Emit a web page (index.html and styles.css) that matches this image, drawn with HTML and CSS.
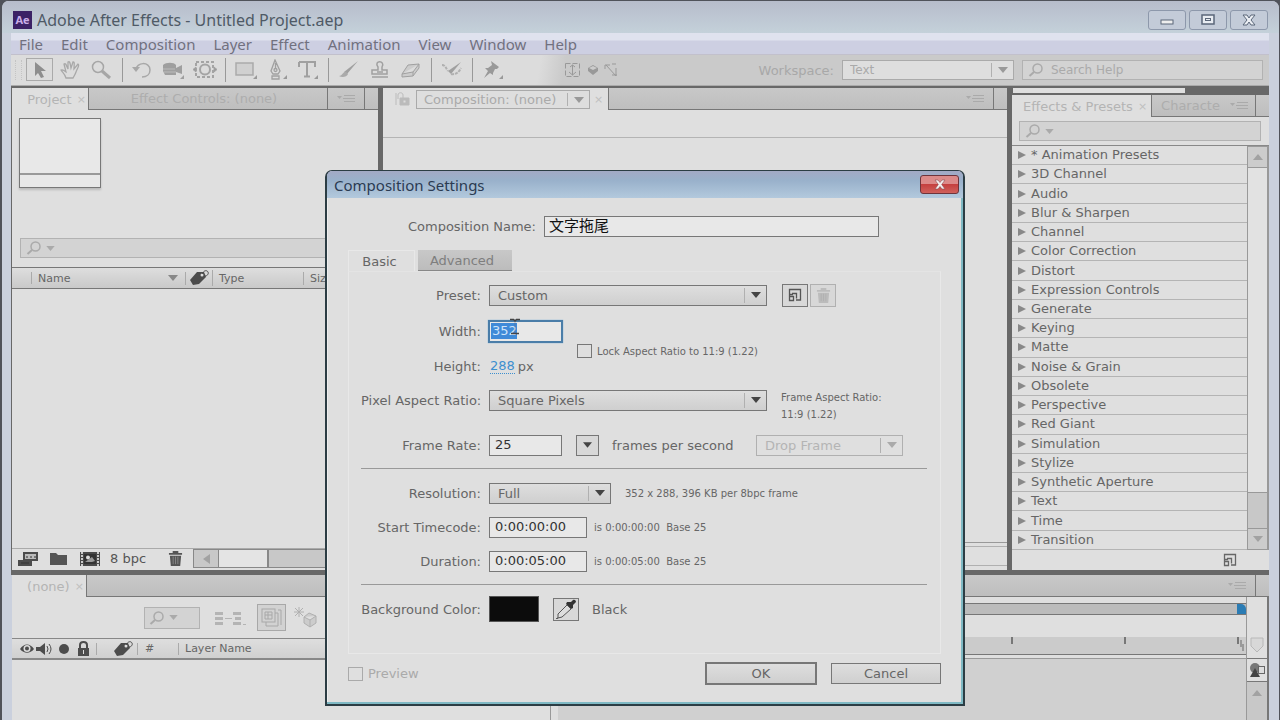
FILE: index.html
```html
<!DOCTYPE html>
<html lang="en">
<head>
<meta charset="utf-8">
<title>Adobe After Effects - Untitled Project.aep</title>
<link rel="stylesheet" href="styles.css">
</head>
<body>
<svg class="defs" aria-hidden="true">
  <symbol id="search" viewBox="0 0 16 14"><circle cx="9.500" cy="5.500" r="4.500" fill="none" stroke="currentColor" stroke-width="1.500"/><path d="M6 9 1.500 13" stroke="currentColor" stroke-width="2"/></symbol>
  <symbol id="down" viewBox="0 0 10 6"><path d="M0 0h10L5 6z" fill="currentColor"/></symbol>
  <symbol id="right" viewBox="0 0 8 8"><path d="M0 0l8 4-8 4z" fill="currentColor"/></symbol>
  <symbol id="flyout" viewBox="0 0 18 10"><path d="M0 2h5L2.500 5z" fill="currentColor"/><path d="M7 1.500h11M6 4.500h12M7 7.500h11" stroke="currentColor" stroke-width="1"/></symbol>
  <symbol id="trash" viewBox="0 0 16 16"><path d="M2 5h12l-1 11H3zM1 2h14v2H1zM5 0h6v2H5z" fill="currentColor"/><path d="M5.500 6v8M8 6v8M10.500 6v8" stroke="#aaa" stroke-opacity=".6"/></symbol>
  <symbol id="tag" viewBox="0 0 20 16"><path d="M1 10 8 2l7 0 2 5-7 7-6 1z" fill="currentColor"/><circle cx="13" cy="5" r="1.500" fill="#ddd"/><path d="M13 4c2-4 5-4 6-2s-1 4-3 4" fill="none" stroke="currentColor"/></symbol>
  <symbol id="newitem" viewBox="0 0 14 14"><path d="M1.500 12.500V1.500h11v10.500H8M1.500 6.500H5M4 5.500h4.500v5M1.500 8.500h4v4h-4z" fill="none" stroke="currentColor" stroke-width="1.300"/></symbol>
</svg>
<div class="window">
  <header class="titlebar">
    <span class="logo">Ae</span>
    <h1>Adobe After Effects - Untitled Project.aep</h1>
    <button class="winbtn" aria-label="Minimize"><svg width="14" height="12"><rect x="1" y="6" width="12" height="4" fill="#eee" stroke="#5b6779"/></svg></button>
    <button class="winbtn" aria-label="Maximize"><svg width="14" height="12"><rect x="1" y="1" width="12" height="9" fill="#e8ecf2" stroke="#5b6779" stroke-width="1.500"/><rect x="4.500" y="4.500" width="5" height="2" fill="none" stroke="#5b6779"/></svg></button>
    <button class="winbtn" aria-label="Close"><svg width="16" height="12"><path d="M2 1h4l2 3 2-3h4l-4 5 4 5h-4L8 8l-2 3H2l4-5z" fill="#eceff4" stroke="#5b6779"/></svg></button>
  </header>
  <nav class="menubar">
    <button>File</button><button>Edit</button><button>Composition</button><button>Layer</button><button>Effect</button><button>Animation</button><button>View</button><button>Window</button><button>Help</button>
  </nav>
  <div class="toolbar">
    <span class="grip"></span>
    <button class="tool on" aria-label="Selection"><svg width="28" height="24"><rect x=".5" y=".5" width="26" height="22" fill="#dcdcdc" stroke="#aaa"/><path d="M9 4v14l3-3 3 5 3-1-3-6h5z" fill="#8e8e8e"/></svg></button>
    <button class="tool" aria-label="Hand"><svg width="24" height="20" fill="none" stroke="#a8a8a8" stroke-width="1.300"><path d="M7 18c-1-4-4-6-5-8 2-1 3 1 5 2L5 4c2-1 2 1 4 5V2c2-1 2 1 3 6l2-6c2 0 1 2 1 7l4-5c2 1 0 3-2 8-1 3-2 4-3 6z"/></svg></button>
    <button class="tool" aria-label="Zoom"><svg width="24" height="20" fill="none" stroke="#a6a6a6"><circle cx="8" cy="7" r="5.500" stroke-width="1.500"/><path d="m12 11 8 7" stroke-width="3"/></svg></button>
    <i class="sep"></i>
    <button class="tool" aria-label="Rotate"><svg width="24" height="20" fill="none" stroke="#a8a8a8" stroke-width="1.500"><path d="M5 10c0-8 14-9 14 0 0 4-3 7-8 7"/><path d="M1 7h8l-4 5z" fill="#a8a8a8" stroke="none"/></svg></button>
    <button class="tool" aria-label="Camera"><svg width="24" height="20" fill="#9f9f9f"><path d="M1 5c3-3 11-3 13 0v3l6-3v9l-6-2v3H3l-2-4zM18 19l4-4v4z"/><path d="M1 9h12M2 12h12" stroke="#bbb"/></svg></button>
    <button class="tool" aria-label="Pan Behind"><svg width="24" height="20" fill="none" stroke="#a4a4a4"><rect x="3" y="2" width="17" height="15" stroke-width="2" stroke-dasharray="3 2"/><circle cx="12" cy="9.500" r="5" stroke-width="2"/><path d="M0 9.500 3 7v5zM24 9.500 21 7v5z" fill="#999"/></svg></button>
    <i class="sep"></i>
    <button class="tool" aria-label="Rectangle"><svg width="26" height="20"><rect x="3" y="3" width="17" height="12" fill="#d0d0d0" stroke="#aaa" stroke-width="1.500"/><path d="M20 19l4-4v4z" fill="#999"/></svg></button>
    <button class="tool" aria-label="Pen"><svg width="24" height="22" fill="none" stroke="#a0a0a0" stroke-width="1.300"><path d="M10 1 6 12l2 3h5l2-3zM7 17h7v3H7zM10.500 4v6"/><circle cx="10.500" cy="11" r="1.500"/><path d="M18 20l4-4v4z" fill="#999" stroke="none"/></svg></button>
    <button class="tool" aria-label="Type"><svg width="24" height="20"><path d="M3 2h16v5M3 7V2M11 2v14M8 16.500h6" fill="none" stroke="#a0a0a0" stroke-width="2"/><path d="M18 19l4-4v4z" fill="#999"/></svg></button>
    <i class="sep"></i>
    <button class="tool" aria-label="Brush"><svg width="24" height="20"><path d="M21 1 10 14l-3-2z" fill="#a0a0a0"/><path d="M9 12c-3-1-3 4-7 4 3 2 8 1 9-2z" fill="#aaa"/></svg></button>
    <button class="tool" aria-label="Clone Stamp"><svg width="22" height="20" fill="none" stroke="#a0a0a0" stroke-width="1.500"><path d="M9 7C4 0 17 0 13 7v3h5v4H3v-4h6zM3 17h16M8 12h6"/></svg></button>
    <button class="tool" aria-label="Eraser"><svg width="24" height="20" fill="#ccc" stroke="#a0a0a0"><path d="m9 5 11-1-6 8-11 2zM3 14v3l11-1 6-8V4M14 12v4"/></svg></button>
    <i class="sep"></i>
    <button class="tool" aria-label="Roto Brush"><svg width="24" height="20"><path d="M21 2 11 14 8 11z" fill="#a0a0a0"/><path d="M2 5c3 0 4 3 6 6m3 3c5 1 8-2 10-6" fill="none" stroke="#b0b0b0" stroke-width="2" stroke-dasharray="3 1"/></svg></button>
    <i class="sep"></i>
    <button class="tool" aria-label="Puppet Pin"><svg width="24" height="20" fill="#999"><path d="m10 1 8 6-2 2-2 0-2 4 0 2-3-2-6 5 4-7-3-3 3 0 4-3z"/><path d="M18 19l4-4v4z"/></svg></button>
    <span class="axes">
      <svg width="18" height="16" fill="none" stroke="#999"><rect x="1.500" y="1.500" width="14" height="13" stroke-dasharray="5 2"/><path d="M8.500 3v10M5 10l3.500 3 3.500-3M6 5l2.500-2L11 5"/></svg>
      <svg width="12" height="12" fill="#999"><path d="m1 4 5-3 5 3v3l-5 4-5-4z"/><path d="m2 4 4-2 4 2-4 2z" fill="#ccc"/></svg>
      <svg width="14" height="14" fill="none" stroke="#999"><path d="m2 2 10 11V5M1 6V2h5M8 1h4M8 12h5"/></svg>
    </span>
    <label class="wslabel" for="ws">Workspace:</label>
    <span class="select ws"><select id="ws"><option>Text</option></select><svg class="arr"><use href="#down"/></svg></span>
    <label class="search help"><svg class="mag"><use href="#search"/></svg><input type="text" placeholder="Search Help" aria-label="Search Help"></label>
  </div>

  <main class="work">
    <section class="panel project">
      <div class="tabs"><button class="tab on">Project <small>×</small></button><button class="tab off">Effect Controls: (none)</button><span class="fly"><svg class="flysvg"><use href="#flyout"/></svg></span><span class="end"></span></div>
      <div class="preview"><div class="thumb"></div></div>
      <label class="search find"><svg class="mag"><use href="#search"/></svg><svg class="arr"><use href="#down"/></svg><input type="text" aria-label="Search project"></label>
      <div class="cols"><span class="c0"></span><span class="c1">Name<svg class="sort"><use href="#down"/></svg></span><span class="c2"><svg width="20" height="16"><use href="#tag"/></svg></span><span class="c3">Type</span><span class="c4">Size</span></div>
      <div class="items"></div>
      <div class="foot">
        <button aria-label="Interpret Footage"><svg width="20" height="14"><path d="M5 0h15v9H5zM0 8h14v6H0z" fill="#4c4c4c"/><path d="M7 2h11v5H7z" fill="#bbb"/><path d="M8 5h2m2 0h2m2 0h2M3 11h8" stroke="#333"/></svg></button>
        <button aria-label="New Folder"><svg width="18" height="13"><path d="M0 1h6l2 2h9v10H0z" fill="#555"/></svg></button>
        <button aria-label="New Composition"><svg width="20" height="14"><path d="M0 0h20v14H0z" fill="#4a4a4a"/><path d="M2 0v14M18 0v14" stroke="#ccc" stroke-width="2" stroke-dasharray="2 1"/><rect x="4" y="2" width="12" height="10" fill="#333"/><circle cx="8" cy="5.500" r="2" fill="#ddd"/><path d="m5 10 7-5 3 4-3 1z" fill="#999"/></svg></button>
        <button class="bpc">8 bpc</button>
        <button aria-label="Delete"><svg width="15" height="15"><use href="#trash"/></svg></button>
        <span class="hscroll"><i class="la"></i><i class="ht"></i></span>
      </div>
    </section>

    <section class="panel comp">
      <div class="tabs"><div class="ctab"><svg width="18" height="14" fill="none" stroke="#bbb"><path d="M2 1v12M4 7V3c0-3 5-3 5 0v3"/><path d="M6 6h9v7H6z" fill="#bbb"/><path d="M9 8h3v3H9z" fill="#ddd"/></svg><span class="select cs"><select aria-label="Composition"><option>Composition: (none)</option></select><svg class="arr"><use href="#down"/></svg></span><small>×</small></div><span class="off grow"></span><span class="fly"><svg class="flysvg"><use href="#flyout"/></svg></span><span class="end"></span></div>
      <div class="viewer-top"></div>
      <div class="viewer"></div>
      <div class="viewer-foot"></div>
    </section>

    <section class="panel fx">
      <div class="strip"></div>
      <div class="tabs"><button class="tab on">Effects &amp; Presets <small>×</small></button><button class="tab off">Characte</button><span class="fly"><svg class="flysvg"><use href="#flyout"/></svg></span><span class="end"></span></div>
      <label class="search fxfind"><svg class="mag"><use href="#search"/></svg><svg class="arr"><use href="#down"/></svg><input type="text" aria-label="Search effects"></label>
      <div class="fxbody">
        <ul>
          <li><svg><use href="#right"/></svg>* Animation Presets</li><li><svg><use href="#right"/></svg>3D Channel</li><li><svg><use href="#right"/></svg>Audio</li><li><svg><use href="#right"/></svg>Blur &amp; Sharpen</li><li><svg><use href="#right"/></svg>Channel</li><li><svg><use href="#right"/></svg>Color Correction</li><li><svg><use href="#right"/></svg>Distort</li><li><svg><use href="#right"/></svg>Expression Controls</li><li><svg><use href="#right"/></svg>Generate</li><li><svg><use href="#right"/></svg>Keying</li><li><svg><use href="#right"/></svg>Matte</li><li><svg><use href="#right"/></svg>Noise &amp; Grain</li><li><svg><use href="#right"/></svg>Obsolete</li><li><svg><use href="#right"/></svg>Perspective</li><li><svg><use href="#right"/></svg>Red Giant</li><li><svg><use href="#right"/></svg>Simulation</li><li><svg><use href="#right"/></svg>Stylize</li><li><svg><use href="#right"/></svg>Synthetic Aperture</li><li><svg><use href="#right"/></svg>Text</li><li><svg><use href="#right"/></svg>Time</li><li><svg><use href="#right"/></svg>Transition</li>
        </ul>
        <div class="vscroll"><span class="va"><svg class="up"><use href="#down"/></svg></span><span class="vt"></span><span class="vtrack"></span><span class="va"><svg><use href="#down"/></svg></span></div>
      </div>
      <div class="fxfoot"><button aria-label="New preset"><svg width="14" height="14"><use href="#newitem"/></svg></button></div>
    </section>
  </main>

  <section class="panel timeline">
    <div class="tabs"><button class="tab on">(none) <small>×</small></button><span class="off grow"></span><span class="fly"><svg class="flysvg"><use href="#flyout"/></svg></span><span class="end"></span></div>
    <div class="tbody">
      <div class="tleft">
        <div class="tbar">
          <label class="search tfind"><svg class="mag"><use href="#search"/></svg><svg class="arr"><use href="#down"/></svg><input type="text" aria-label="Search layers"></label>
          <svg width="32" height="16" fill="#b4b4b4"><path d="M0 2h8v3H0zM0 7h8v3H0zM0 12h8v3H0zM18 2h8v3h-8zM20 7h6v3h-6zM18 12h8v3h-8zM10 8h7v1h-7zM28 14h3v1h-3z"/></svg>
          <svg width="30" height="28" fill="none" stroke="#a8a8a8"><rect x=".5" y=".5" width="28" height="26" fill="#d2d2d2"/><rect x="5" y="5" width="13" height="13"/><path d="M8 8h7v7H8zM11 8v7M8 11h7M18 9h3v13H9v-4M21 6h3v15"/></svg>
          <svg width="26" height="22" fill="none" stroke="#b0b0b0"><path d="M6 0v10M1 5h10M2 1l8 8M10 1 2 9"/><path d="m11 10 5-4 7 3v7l-6 4-6-4zm0 0 6 3 6-4M17 13v7" fill="#ccc"/></svg>
        </div>
        <div class="tcols">
          <svg width="70" height="16" fill="#4c4c4c"><path d="M0 8c4-6 10-6 14 0-4 5-10 5-14 0z"/><circle cx="7" cy="7.500" r="3.500" fill="#ddd"/><circle cx="7" cy="7.500" r="2"/><path d="M16 6h4l5-4v12l-5-4h-4z"/><path d="M27 5q2 3 0 6M29 3q4 5 0 10" fill="none" stroke="#4c4c4c"/><circle cx="44" cy="8" r="5"/><path d="M58 7h11v8H58z"/><path d="M60 7V4c0-4 7-4 7 0v3" fill="none" stroke="#4c4c4c" stroke-width="2"/><path d="M63 9h1v4h-1z" fill="#ddd"/></svg>
          <span class="bar t1"></span><svg width="20" height="16" fill="none"><use href="#tag"/></svg><span class="bar t2">#</span><span class="bar t3">Layer Name</span>
        </div>
      </div>
      <div class="tright">
        <div class="nav"><i></i></div>
        <div class="ruler"><i></i><i></i><i></i><i></i><i></i><i></i></div>
        <div class="tracks"></div>
      </div>
      <div class="tside">
        <div class="mk"><svg width="14" height="16"><path d="M1 1h12v8l-6 6-6-6z" fill="#d8d8d8" stroke="#b8b8b8"/></svg></div>
        <div class="cb"><svg width="18" height="16"><circle cx="7" cy="6" r="5" fill="#777"/><path d="M7 6l5 9H2z" fill="#444"/><rect x="10.500" y="4.500" width="6" height="7" fill="#ddd" stroke="#666"/></svg></div>
        <div class="up-arrow"><svg><use href="#down"/></svg></div>
      </div>
    </div>
  </section>
</div>

<form class="dialog" onsubmit="return false">
  <div class="dtitle"><h2>Composition Settings</h2><button class="close" type="button" aria-label="Close"><svg width="14" height="11"><path d="M2 1h3l2 2.500L9 1h3L8.700 5.500 12 10H9L7 7.500 5 10H2l3.300-4.500z" fill="#f4f0f0" stroke="#8b4a4f" stroke-width=".6"/></svg></button></div>
  <div class="dbody">
    <div class="row name"><label for="cname">Composition Name:</label><input id="cname" class="field" type="text" value="文字拖尾"></div>
    <div class="dtabs"><button type="button" class="dt on">Basic</button><button type="button" class="dt">Advanced</button></div>
    <div class="box">
      <div class="row preset"><label for="preset">Preset:</label><span class="select wide"><select id="preset"><option>Custom</option></select><svg class="arr"><use href="#down"/></svg></span>
        <button type="button" class="sq first" aria-label="Save preset"><svg width="14" height="14"><use href="#newitem"/></svg></button><button type="button" class="sq dim" disabled aria-label="Delete preset"><svg width="15" height="15"><use href="#trash"/></svg></button></div>
      <div class="size">
        <div class="dims">
          <div class="row"><label for="w">Width:</label><span class="caretwrap"><input id="w" class="field focus" type="text" value="352"><svg class="ibeam" width="10" height="18"><path d="M0 1.500h3.500L5 3l1.500-1.500H10M1 15.500h8" fill="none" stroke="#444" stroke-width="1.500"/><path d="M5 3v12" stroke="#667" stroke-opacity=".4"/></svg></span></div>
          <div class="row h"><label for="h">Height:</label><button id="h" type="button" class="hot">288</button><span class="px">px</span></div>
        </div>
        <label class="check lock"><input type="checkbox">Lock Aspect Ratio to 11:9 (1.22)</label>
      </div>
      <div class="row par"><label for="par">Pixel Aspect Ratio:</label><span class="select wide"><select id="par"><option>Square Pixels</option></select><svg class="arr"><use href="#down"/></svg></span><p class="note far">Frame Aspect Ratio:<br>11:9 (1.22)</p></div>
      <div class="row rate"><label for="fr">Frame Rate:</label><input id="fr" class="field num" type="text" value="25"><button type="button" class="drop" aria-label="Frame rates"><svg class="dropsvg"><use href="#down"/></svg></button><span class="fps">frames per second</span><span class="select df"><select disabled aria-label="Drop Frame"><option>Drop Frame</option></select><svg class="arr"><use href="#down"/></svg></span></div>
      <hr>
      <div class="row res"><label for="res">Resolution:</label><span class="select full"><select id="res"><option>Full</option></select><svg class="arr"><use href="#down"/></svg></span><span class="note n2">352 x 288, 396 KB per 8bpc frame</span></div>
      <div class="row tc"><label for="st">Start Timecode:</label><input id="st" class="field time" type="text" value="0:00:00:00"><span class="note">is 0:00:00:00&nbsp; Base 25</span></div>
      <div class="row tc"><label for="du">Duration:</label><input id="du" class="field time" type="text" value="0:00:05:00"><span class="note">is 0:00:05:00&nbsp; Base 25</span></div>
      <hr>
      <div class="row bg"><label for="bgc">Background Color:</label><button type="button" id="bgc" class="swatch" aria-label="Background color"></button><button type="button" class="sq eye" aria-label="Eyedropper"><svg width="22" height="20"><path d="m12 3 4 0 2-2c2-1 3 1 3 2l-3 3 0 3-2 1-5-5z" fill="#333"/><path d="m12 6 4 4-9 8-4 1 0-4z" fill="#ddd" stroke="#555"/><path d="m3 19-2 1" stroke="#333"/></svg></button><span>Black</span></div>
    </div>
    <div class="actions"><label class="check prev"><input type="checkbox" disabled>Preview</label><button class="btn ok">OK</button><button type="button" class="btn">Cancel</button></div>
  </div>
</form>
</body>
</html>
```
FILE: styles.css
```css
* { box-sizing: border-box; }
body { margin: 0; background: #50525a; font-family: "DejaVu Sans", "Noto Sans CJK SC", sans-serif; font-size: 12px; color: #666; overflow: hidden; }
button, input, select { font: inherit; color: inherit; margin: 0; padding: 0; border: 0; border-radius: 0; background: none; }
button { display: flex; align-items: center; justify-content: center; white-space: nowrap; }
input { min-width: 0; outline: 0; }
h1, h2, p, ul { margin: 0; padding: 0; font-weight: 400; }
svg { display: block; flex: none; }
small { font-size: 11px; color: #c0c0c0; }
.defs { position: absolute; width: 0; height: 0; }

.window { height: 100vh; display: flex; flex-direction: column; border: solid #50525a; border-width: 1px 1px 0 2px; border-radius: 8px 8px 0 0; padding: 0 10px 0 9px; background: #cad0dd; }
.titlebar { flex: none; height: 32px; margin: 0 -10px 0 -9px; padding: 6px 11px 0 11px; display: flex; align-items: center; gap: 3px; background: linear-gradient(#b7bccb, #c4d1da); border-radius: 7px 7px 0 0; }
.logo { width: 19px; height: 18px; background: #3c2266; color: #c9aee8; font: bold 11px/18px "Open Sans", sans-serif; text-align: center; }
h1 { flex: 1; font: 16px/20px "Noto Sans", sans-serif; color: #4f5a66; margin-left: 2px; }
.winbtn { width: 38px; height: 20px; border: 1px solid #8d98ab; border-radius: 3px; background: #c3cbd8; }
.menubar { flex: none; height: 22px; display: flex; gap: 18px; padding-left: 8px; background: linear-gradient(#dfe2ee 0 7px, #cdcfe2 8px); border-bottom: 1px solid #c2c0cc; font: 15px/20px "Noto Sans", sans-serif; color: #71717f; }
.toolbar { flex: none; height: 31px; display: flex; align-items: center; background: linear-gradient(100deg, #dcdcdc 0 42%, #cacaca 44%); border-bottom: 1px solid #aaa; color: #a8a8a8; }
.grip { width: 7px; height: 20px; margin: 0 2px 0 4px; border: dotted #c4c4c4; border-width: 0 1px; }
.tool { width: 31px; height: 26px; flex: none; }
.sep { width: 1px; height: 24px; margin: 0 4px 0 5px; background: #999; flex: none; }
.axes { display: flex; align-items: center; gap: 5px; margin-left: 56px; }
.wslabel { margin-left: auto; padding-left: 8px; font-size: 13px; }
.select { position: relative; display: block; }
.select select { appearance: none; width: 100%; height: 100%; padding-left: 8px; border: 1px solid #777; background: linear-gradient(#dedede, #cfcfcf); opacity: 1; }
.select .arr { position: absolute; right: 6px; top: 7px; width: 10px; height: 6px; color: #444; pointer-events: none; }
.select::after { content: ""; position: absolute; right: 22px; top: 3px; bottom: 3px; width: 1px; background: #b0b0b0; }
.ws { width: 172px; height: 20px; margin: 0 8px; }
.ws select, .cs select { border-color: #aaa; background: #dedede; padding-left: 7px; color: #aaa; }
.ws .arr, .cs .arr { color: #999; }
.search { display: flex; align-items: center; gap: 6px; padding-left: 5px; height: 20px; background: #d3d3d3; border: 1px solid #b2b2b2; color: #aaa; }
.search input { flex: 1; width: 0; }
.search ::placeholder { color: #aaa; opacity: 1; }
.mag { width: 16px; height: 14px; }
.search .arr { width: 9px; height: 5px; margin-left: -2px; }
.help { width: 241px; margin-right: 6px; gap: 7px; }

.work { flex: 1; min-height: 0; display: grid; grid-template-columns: 366px 1fr 257px; gap: 5px; padding: 2px 0 5px 1px; background: #686868; }
.panel { background: #dfdfdf; display: flex; flex-direction: column; min-width: 0; min-height: 0; }
.tabs { display: flex; flex: none; height: 22px; color: #b4b4b4; font-size: 13px; }
.tab.on { padding: 1px 5px 0 13px; gap: 5px; background: #dfdfdf; }
.tab.off, .off, .fly, .end { background: linear-gradient(#c8c8c8, #bebebe); border-bottom: 1px solid #777; }
.tab.off { border-left: 1px solid #777; color: #adadad; }
.grow { flex: 1; border-left: 1px solid #777; }
.fly { width: 37px; display: flex; align-items: center; justify-content: center; color: #aaa; }
.flysvg { width: 18px; height: 10px; }
.end { width: 14px; border-left: 1px solid #777; }
.project .tab.on { width: 76px; padding-right: 0; }
.project .tab.off { flex: 1; padding-right: 8px; }
.project .fly { border-left: 1px solid #777; }
.preview { height: 128px; padding: 8px 7px; flex: none; }
.thumb { width: 82px; height: 70px; border: 1px solid #777; background: linear-gradient(#e8e8e8 0 54px, #999 54px 56px, #e8e8e8 56px); box-shadow: 0 2px 2px #bbb; }
.find { margin: 0 8px; flex: none; }
.cols { flex: none; height: 22px; margin-top: 9px; border: solid #777; border-width: 1px 0; background: linear-gradient(#dedede, #c9c9c9); display: flex; align-items: center; font-size: 11px; color: #666; }
.c0 { width: 20px; height: 12px; border-right: 1px solid #aaa; }
.c1 { width: 154px; padding: 0 5px 0 6px; display: flex; align-items: center; justify-content: space-between; border-right: 1px solid #aaa; }
.sort { width: 14px; height: 6px; color: #888; }
.c2 { width: 27px; color: #4c4c4c; display: flex; justify-content: center; border-right: 1px solid #aaa; }
.c3 { width: 91px; padding-left: 6px; border-right: 1px solid #aaa; }
.c4 { padding-left: 6px; }
.items { flex: 1; border-bottom: 1px solid #aaa; }
.foot { flex: none; height: 21px; display: flex; align-items: center; padding-left: 6px; padding-bottom: 2px; gap: 12px; }
.foot .bpc { margin: 0 10px 0 -2px; font-size: 13px; }
.foot button { color: #555; }
.hscroll { flex: 1; height: 19px; margin-left: -2px; display: flex; background: #c8c8c8; border: 1px solid #888; }
.la { width: 25px; display: flex; align-items: center; justify-content: center; border-right: 1px solid #888; }
.la::before { content: ""; border: solid transparent; border-width: 5px 7px 5px 0; border-right-color: #a2a2a2; }
.ht { width: 50px; background: #e4e4e4; border-right: 2px solid #888; }
.ctab { display: flex; align-items: center; width: 225px; padding-left: 11px; gap: 4px; }
.cs { width: 174px; height: 19px; }
.cs select { padding-left: 7px; }
.viewer-top { height: 28px; flex: none; border-bottom: 1px solid #b4b4b4; }
.viewer { flex: 1; }
.viewer-foot { flex: none; height: 28px; border-top: 1px solid #999; border-bottom: 4px solid #dfdfdf; box-shadow: inset 0 3px #dfdfdf, inset 0 4px #b0b0b0, inset 0 -1px #b0b0b0; }
.strip { flex: none; height: 7px; border-bottom: 2px solid #686868; border-left: 1px solid #686868; background: linear-gradient(90deg, #dfdfdf 172px, #686868 172px); }
.fx .tab.on { width: 139px; padding: 1px 0 0 11px; justify-content: flex-start; }
.fx .tab.off { flex: 1; overflow: hidden; padding-left: 6px; }
.fx .fly { width: 32px; }
.fxfind { flex: none; margin: 4px 8px 4px 7px; }
.fxbody { flex: 1; min-height: 0; display: flex; border-top: 1px solid #888; }
ul { flex: 1; display: flex; flex-direction: column; list-style: none; font-size: 13px; }
li { flex: 1; display: flex; align-items: center; gap: 5px; padding-left: 6px; border-bottom: 1px solid #b4b4b4; line-height: 18px; }
li svg { width: 8px; height: 8px; color: #888; }
.vscroll { width: 22px; border: solid #999; border-width: 0 2px 0 1px; display: flex; flex-direction: column; background: #dfdfdf; }
.va { height: 22px; background: #ccc; border: solid #999; border-width: 1px 0; display: flex; align-items: center; justify-content: center; color: #a2a2a2; }
.va svg, .up-arrow svg { width: 12px; height: 6px; }
.up, .up-arrow svg { transform: rotate(180deg); }
.vt { flex: 1; background: #e2e2e2; }
.vtrack { height: 36px; background: #c8c8c8; border-top: 1px solid #999; }
.fxfoot { flex: none; height: 20px; display: flex; justify-content: flex-end; align-items: center; padding-right: 32px; }

.timeline { flex: none; height: 145px; margin-left: 1px; }
.timeline .tab.on { width: 74px; padding-right: 0; }
.tbody { flex: 1; display: flex; }
.tleft { width: 539px; border-right: 1px solid #999; margin-right: 7px; }
.tbar { height: 41px; display: flex; align-items: center; padding-left: 132px; gap: 15px; }
.tfind { width: 56px; height: 22px; padding-left: 4px; }
.tbar > svg:nth-of-type(2) { margin-left: -5px; }
.tbar > svg:nth-of-type(3) { margin-left: -9px; }
.tcols { height: 22px; display: flex; align-items: center; border: solid #888; border-width: 1px 0 2px; background: linear-gradient(#dedede, #d0d0d0); padding-left: 8px; font-size: 11px; color: #4c4c4c; }
.bar { border-left: 1px solid #aaa; line-height: 12px; color: #666; }
.t1 { height: 12px; margin-left: 6px; width: 17px; }
.t2 { margin-left: 4px; padding-left: 7px; width: 41px; }
.t3 { padding-left: 6px; }
.tright { flex: 1; padding-top: 6px; display: flex; flex-direction: column; border-right: 1px solid #999; }
.nav { height: 12px; background: #bcbcbc; border: solid #777; border-width: 1px 0; display: flex; justify-content: flex-end; }
.nav i { width: 9px; background: #2b7cb4; border-radius: 0 5px 0 0; }
.ruler { height: 40px; border-bottom: 1px solid #777; background: linear-gradient(#dfdfdf 22px, #cbcbcb 22px); display: flex; justify-content: space-between; align-items: flex-end; padding: 0 7px 10px 114px; }
.ruler i { width: 2px; height: 7px; background: #777; }
.ruler i:last-child { outline: 0; box-shadow: 3px 3px #999, 5px 7px #999; }
.tracks { flex: 1; margin-top: 3px; background: #d0d0d0; border-top: 1px solid #999; }
.tside { width: 22px; border-right: 2px solid #777; display: flex; flex-direction: column; }
.mk { height: 62px; display: flex; align-items: flex-end; justify-content: center; padding-bottom: 5px; border-bottom: 1px solid #777; }
.cb { height: 22px; display: flex; align-items: center; justify-content: center; }
.up-arrow { flex: 1; background: #c8c8c8; border-top: 1px solid #777; display: flex; justify-content: center; padding-top: 8px; color: #a2a2a2; }

.dialog { position: absolute; left: 325px; top: 170px; width: 640px; border: 2px solid #2c3d44; border-top-width: 1px; border-radius: 7px 7px 0 0; background: #dfdfdf; box-shadow: inset -2px -2px #7fb9c4, inset 1px 0 #eee; font-size: 13px; }
.dtitle { height: 27px; display: flex; align-items: center; justify-content: space-between; padding: 0 4px 0 7px; background: linear-gradient(#a3a9c5, #99b1cb 35%, #b3c9dd); border-radius: 5px 5px 0 0; }
h2 { font: 15px/20px "Noto Sans", sans-serif; color: #2b3b52; }
.close { width: 39px; height: 19px; border: 1px solid #6e343b; border-radius: 3px; background: linear-gradient(#dc8a89 0 45%, #c5403f 50%, #d0615c); }
.dbody { padding: 17px 22px 19px 21px; }
.row { display: flex; align-items: center; height: 22px; white-space: nowrap; }
.row > label { width: 120px; margin-right: 8px; text-align: right; flex: none; }
.field { height: 21px; border: 1px solid #777; padding: 0 0 2px 5px; background: #e8e8e8; color: #333; }
.row.name > label { width: 188px; }
.name .field { width: 335px; padding: 0 0 3px 4px; font: 15px/16px "Noto Sans CJK SC", sans-serif; color: #111; }
.dtabs { display: flex; gap: 3px; margin-top: 13px; }
.dt { height: 21px; width: 94px; background: linear-gradient(#c8c8c8, #bcbcbc); border-bottom: 1px solid #888; color: #7e7e7e; padding-right: 6px; }
.dt.on { width: 67px; padding-right: 4px; background: none; border: solid #e8e8e8; border-width: 1px 1px 0; color: #666; }
.box { border: 1px solid #e8e8e8; border-top-color: #e4e4e4; padding: 12px 13px 33px 12px; }
.wide { width: 278px; height: 21px; }
.sq { width: 26px; height: 23px; border: 1px solid #777; background: #d8d8d8; color: #555; flex: none; }
.first { margin: 0 2px 0 15px; }
.dim { color: #bcbcbc; border-color: #b0b0b0; }
.size { display: flex; align-items: center; gap: 14px; margin-top: 14px; }
.row.h { margin-top: 13px; }
.caretwrap { position: relative; margin-left: -1px; }
.focus { display: block; width: 75px; height: 23px; border: 2px solid #4a7da8; padding: 0 0 2px 2px; color: #cfe4fa; background: linear-gradient(#3f8ad8, #3f8ad8) 1px 1px / 26px 16px no-repeat #e8e8e8; box-shadow: 0 0 1px #5fa8d8; }
.ibeam { position: absolute; left: 22px; top: -2px; }
.hot { color: #3d8fcf; border-bottom: 1px dotted #3d8fcf; line-height: 15px; margin-left: 1px; }
.px { margin-left: 3px; }
.check { display: flex; align-items: center; gap: 5px; }
.check input { appearance: none; width: 15px; height: 14px; border: 1px solid #777; flex: none; }
.lock, .note { font-size: 10px; }
.lock { margin-top: 5px; }
.par { margin-top: 12px; }
.far { line-height: 17px; margin: 12px 0 0 14px; }
.rate { margin-top: 23px; }
.num { width: 73px; }
.drop { width: 23px; height: 21px; margin: 0 13px 0 14px; border: 1px solid #777; background: #d8d8d8; color: #444; }
.dropsvg { width: 9px; height: 6px; }
.df { width: 147px; height: 21px; margin-left: auto; margin-right: 24px; }
.df select { background: none; border-color: #b0b0b0; color: #b4b4b4; }
.df .arr { color: #aaa; }
hr { margin: 12px 0 13px; border: 0; border-top: 1px solid #999; }
.full { width: 122px; height: 21px; }
.n2 { margin-left: 14px; }
.tc { margin-top: 12px; }
.time { width: 98px; }
.tc .note { margin-left: 7px; }
.swatch { width: 50px; height: 26px; background: #0c0c0c; border: 1px solid #555; }
.eye { margin: 0 13px 0 14px; }
.actions { display: flex; align-items: center; gap: 14px; margin-top: 8px; height: 23px; }
.prev { flex: 1; color: #aaa; }
.prev input { border-color: #aaa; }
.btn { width: 110px; height: 21px; border: 1px solid #777; background: linear-gradient(#dedede, #cfcfcf); }
.btn.ok { width: 112px; height: 23px; border-width: 2px; }
```
